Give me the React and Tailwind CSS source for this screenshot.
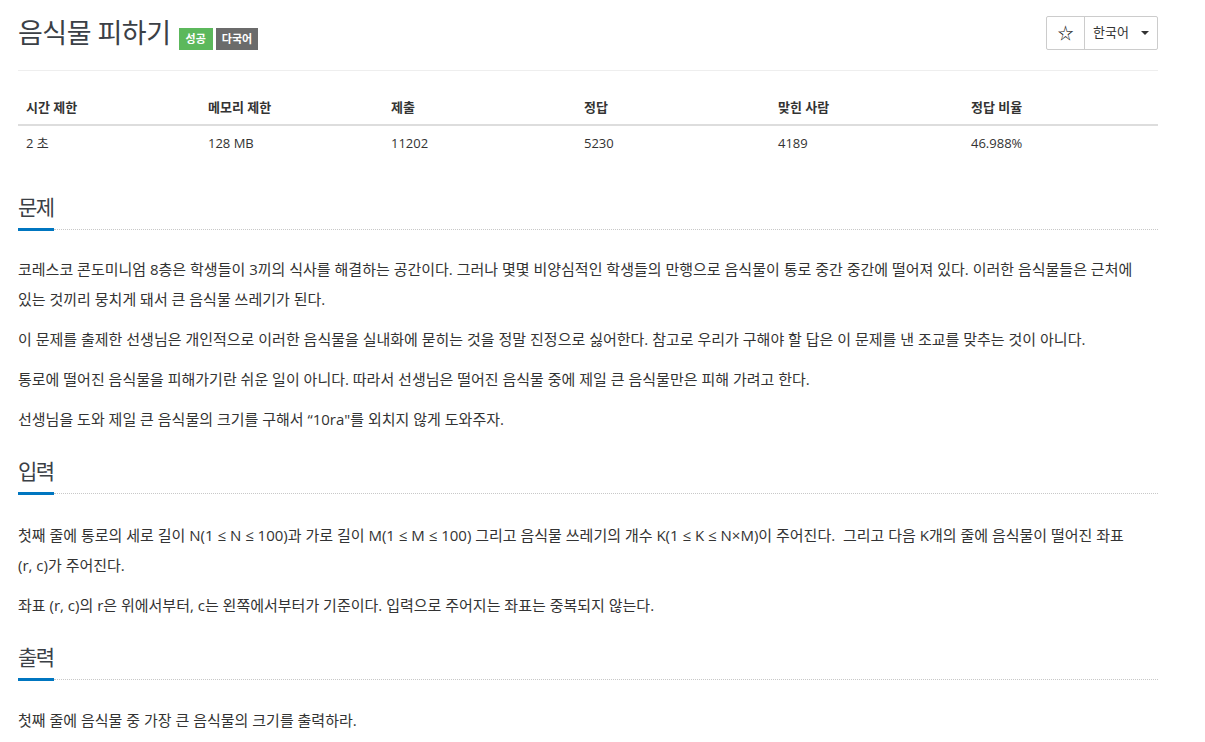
import React from "react";

const font = { fontFamily: '"Open Sans", "Noto Sans CJK KR", sans-serif' };

function SectionHeading({ children }) {
  return (
    <div className="flex items-end">
      <h2 className="border-b-[3px] border-[#0076c0] pb-[8px] text-[21px] leading-[26px] tracking-[-1.5px] font-normal text-[#3b4046]">
        {children}
      </h2>
      <div className="flex-1 border-b border-dotted border-[#c8c8c8] mb-[1px]" />
    </div>
  );
}

export default function App() {
  const cols = [
    ["시간 제한", "2 초", "w-[182px]"],
    ["메모리 제한", "128 MB", "w-[183px]"],
    ["제출", "11202", "w-[193px]"],
    ["정답", "5230", "w-[194px]"],
    ["맞힌 사람", "4189", "w-[193px]"],
    ["정답 비율", "46.988%", "w-[195px]"],
  ];
  return (
    <div className="bg-white min-h-[742px] pl-[18px] text-[#333] break-keep" style={font}>
      <div className="w-[1140px]">
        {/* header */}
        <div className="flex items-start justify-between pt-[16px] pb-[20px] border-b border-[#eee]">
          <div className="flex items-end">
            <h1 className="text-[27px] leading-[34px] tracking-[-0.5px] font-normal text-[#3b4046]">음식물 피하기</h1>
            <span className="ml-[8px] bg-[#5cb85c] text-white text-[11px] leading-[22px] h-[22px] px-[7px] font-semibold">성공</span>
            <span className="ml-[3px] bg-[#6b6b6b] text-white text-[11px] leading-[22px] h-[22px] px-[6px] font-semibold">다국어</span>
          </div>
          <div className="flex h-[34px] border border-[#ccc] rounded-[2px] text-[13px] text-[#333]">
            <div className="w-[38px] flex items-center justify-center border-r border-[#ccc] text-[16px] text-[#222]">☆</div>
            <div className="w-[72px] flex items-center pl-[8px]">
              <span>한국어</span>
              <span className="ml-[12px] w-0 h-0 border-l-[4px] border-r-[4px] border-t-[4px] border-l-transparent border-r-transparent border-t-[#333]" />
            </div>
          </div>
        </div>

        {/* table */}
        <table className="mt-[20px] w-full border-collapse text-[13px]">
          <thead>
            <tr className="border-b-2 border-[#ddd]">
              {cols.map(([h, , w]) => (
                <th key={h} className={`${w} text-left font-bold px-[8px] py-[8px] leading-[17px]`}>{h}</th>
              ))}
            </tr>
          </thead>
          <tbody>
            <tr>
              {cols.map(([h, v]) => (
                <td key={h} className="text-left px-[8px] py-[8px] leading-[18px]">{v}</td>
              ))}
            </tr>
          </tbody>
        </table>

        {/* 문제 */}
        <section className="mt-[34px]">
          <SectionHeading>문제</SectionHeading>
          <div className="mt-[23px] text-[15px] leading-[30px] text-[#333]">
            <p className="mb-[10px]">코레스코 콘도미니엄 8층은 학생들이 3끼의 식사를 해결하는 공간이다. 그러나 몇몇 비양심적인 학생들의 만행으로 음식물이 통로 중간 중간에 떨어져 있다. 이러한 음식물들은 근처에 있는 것끼리 뭉치게 돼서 큰 음식물 쓰레기가 된다.</p>
            <p className="mb-[10px]">이 문제를 출제한 선생님은 개인적으로 이러한 음식물을 실내화에 묻히는 것을 정말 진정으로 싫어한다. 참고로 우리가 구해야 할 답은 이 문제를 낸 조교를 맞추는 것이 아니다.</p>
            <p className="mb-[10px]">통로에 떨어진 음식물을 피해가기란 쉬운 일이 아니다. 따라서 선생님은 떨어진 음식물 중에 제일 큰 음식물만은 피해 가려고 한다.</p>
            <p className="mb-[10px]">선생님을 도와 제일 큰 음식물의 크기를 구해서 “10ra"를 외치지 않게 도와주자.</p>
          </div>
        </section>

        {/* 입력 */}
        <section className="mt-[24px]">
          <SectionHeading>입력</SectionHeading>
          <div className="mt-[25px] text-[15px] leading-[30px] text-[#333]">
            <p className="mb-[10px]">첫째 줄에 통로의 세로 길이 N(1 ≤ N ≤ 100)과 가로 길이 M(1 ≤ M ≤ 100) 그리고 음식물 쓰레기의 개수 K(1 ≤ K ≤ N×M)이 주어진다.&nbsp; 그리고 다음 K개의 줄에 음식물이 떨어진 좌표 <span className="whitespace-nowrap">(r, c)가</span> 주어진다.</p>
            <p className="mb-[10px]">좌표 (r, c)의 r은 위에서부터, c는 왼쪽에서부터가 기준이다. 입력으로 주어지는 좌표는 중복되지 않는다.</p>
          </div>
        </section>

        {/* 출력 */}
        <section className="mt-[24px]">
          <SectionHeading>출력</SectionHeading>
          <div className="mt-[24px] text-[15px] leading-[30px] text-[#333]">
            <p className="mb-[10px]">첫째 줄에 음식물 중 가장 큰 음식물의 크기를 출력하라.</p>
          </div>
        </section>
      </div>
    </div>
  );
}
